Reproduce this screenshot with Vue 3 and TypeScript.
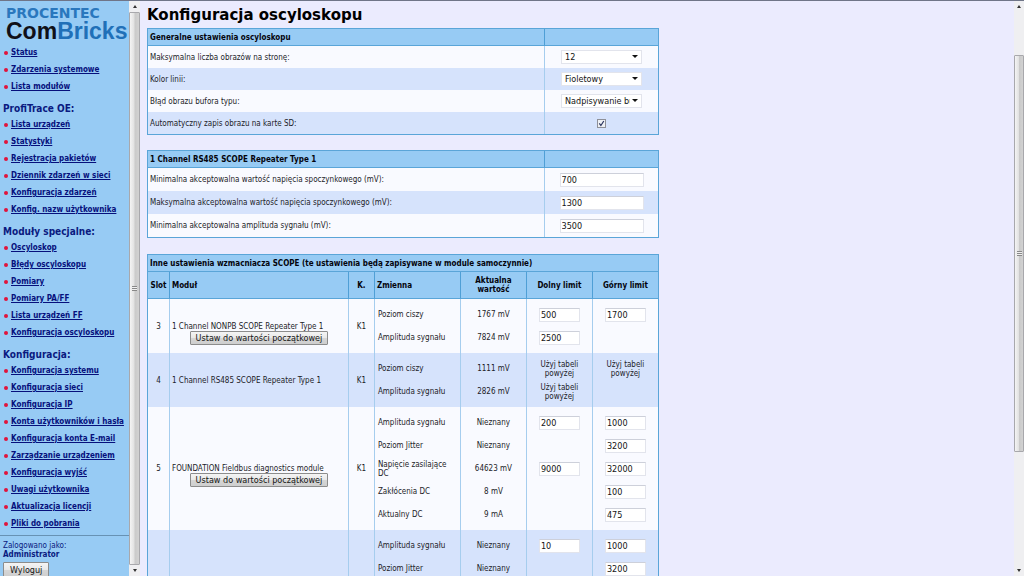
<script setup lang="ts">
import { ref } from 'vue'

interface MenuSection {
  title: string
  links: string[]
}

interface Variable {
  name: string
  value: string
  low?: string
  high?: string
}

interface ModuleRow {
  slot: string
  name: string
  channel: string
  resettable: boolean
  shared: boolean
  variables: Variable[]
}

const sections: MenuSection[] = [
  { title: '', links: ['Status', 'Zdarzenia systemowe', 'Lista modułów'] },
  {
    title: 'ProfiTrace OE:',
    links: ['Lista urządzeń', 'Statystyki', 'Rejestracja pakietów', 'Dziennik zdarzeń w sieci', 'Konfiguracja zdarzeń', 'Konfig. nazw użytkownika'],
  },
  {
    title: 'Moduły specjalne:',
    links: ['Oscyloskop', 'Błędy oscyloskopu', 'Pomiary', 'Pomiary PA/FF', 'Lista urządzeń FF', 'Konfiguracja oscyloskopu'],
  },
  {
    title: 'Konfiguracja:',
    links: [
      'Konfiguracja systemu', 'Konfiguracja sieci', 'Konfiguracja IP', 'Konta użytkowników i hasła', 'Konfiguracja konta E-mail',
      'Zarządzanie urządzeniem', 'Konfiguracja wyjść', 'Uwagi użytkownika', 'Aktualizacja licencji', 'Pliki do pobrania',
    ],
  },
]

const selects = ref([
  { id: 'per-page', label: 'Maksymalna liczba obrazów na stronę:', value: '12' },
  { id: 'line-color', label: 'Kolor linii:', value: 'Fioletowy' },
  { id: 'buffer-mode', label: 'Błąd obrazu bufora typu:', value: 'Nadpisywanie bufora' },
])
const autoSave = ref(true)

const limits = ref([
  { id: 'idle-min', label: 'Minimalna akceptowalna wartość napięcia spoczynkowego (mV):', value: '700' },
  { id: 'idle-max', label: 'Maksymalna akceptowalna wartość napięcia spoczynkowego (mV):', value: '1300' },
  { id: 'amp-min', label: 'Minimalna akceptowalna amplituda sygnału (mV):', value: '3500' },
])

const modules = ref<ModuleRow[]>([
  {
    slot: '3', name: '1 Channel NONPB SCOPE Repeater Type 1', channel: 'K1', resettable: true, shared: false,
    variables: [
      { name: 'Poziom ciszy', value: '1767 mV', low: '500', high: '1700' },
      { name: 'Amplituda sygnału', value: '7824 mV', low: '2500' },
    ],
  },
  {
    slot: '4', name: '1 Channel RS485 SCOPE Repeater Type 1', channel: 'K1', resettable: false, shared: true,
    variables: [
      { name: 'Poziom ciszy', value: '1111 mV', low: 'Użyj tabeli powyżej', high: 'Użyj tabeli powyżej' },
      { name: 'Amplituda sygnału', value: '2826 mV', low: 'Użyj tabeli powyżej' },
    ],
  },
  {
    slot: '5', name: 'FOUNDATION Fieldbus diagnostics module', channel: 'K1', resettable: true, shared: false,
    variables: [
      { name: 'Amplituda sygnału', value: 'Nieznany', low: '200', high: '1000' },
      { name: 'Poziom Jitter', value: 'Nieznany', high: '3200' },
      { name: 'Napięcie zasilające DC', value: '64623 mV', low: '9000', high: '32000' },
      { name: 'Zakłócenia DC', value: '8 mV', high: '100' },
      { name: 'Aktualny DC', value: '9 mA', high: '475' },
    ],
  },
  {
    slot: '', name: '', channel: '', resettable: false, shared: false,
    variables: [
      { name: 'Amplituda sygnału', value: 'Nieznany', low: '10', high: '1000' },
      { name: 'Poziom Jitter', value: 'Nieznany', high: '3200' },
    ],
  },
])
</script>

<template>
  <div class="frames">
    <aside class="sidebar">
      <div class="logo">
        <span class="brand">PROCENTEC</span>
        <span class="product">Com<span class="accent">Bricks</span></span>
      </div>
      <nav>
        <section v-for="s in sections" :key="s.title">
          <h2 v-if="s.title">{{ s.title }}</h2>
          <ul>
            <li v-for="l in s.links" :key="l"><a href="#">{{ l }}</a></li>
          </ul>
        </section>
      </nav>
      <div class="user">
        <div>Zalogowano jako:</div>
        <strong>Administrator</strong>
        <button type="button" class="btn logout">Wyloguj</button>
      </div>
    </aside>

    <div class="bar" aria-hidden="true">
      <i class="up"></i>
      <div class="thumb"><i class="grip"></i></div>
      <i class="down"></i>
    </div>

    <main>
      <h1>Konfiguracja oscyloskopu</h1>

      <table class="form general">
        <thead>
          <tr><th scope="col">Generalne ustawienia oscyloskopu</th><th class="field"></th></tr>
        </thead>
        <tbody>
          <tr v-for="s in selects" :key="s.id">
            <td><label :for="s.id">{{ s.label }}</label></td>
            <td class="field">
              <span class="select"><select :id="s.id" v-model="s.value"><option>{{ s.value }}</option></select></span>
            </td>
          </tr>
          <tr>
            <td><label for="auto-save">Automatyczny zapis obrazu na karte SD:</label></td>
            <td class="field">
              <span class="check">
                <input id="auto-save" v-model="autoSave" type="checkbox">
                <svg v-if="autoSave" viewBox="0 0 9 9"><path d="M2.3 4.3 L3.9 6.5 L6.8 2" /></svg>
              </span>
            </td>
          </tr>
        </tbody>
      </table>

      <table class="form limits">
        <thead>
          <tr><th scope="col">1 Channel RS485 SCOPE Repeater Type 1</th><th class="field"></th></tr>
        </thead>
        <tbody>
          <tr v-for="l in limits" :key="l.id">
            <td><label :for="l.id">{{ l.label }}</label></td>
            <td class="field"><input :id="l.id" v-model="l.value" type="text" class="wide"></td>
          </tr>
        </tbody>
      </table>

      <table class="modules">
        <colgroup>
          <col class="c-slot"><col><col class="c-ch"><col class="c-var"><col class="c-num"><col class="c-num"><col class="c-num">
        </colgroup>
        <thead>
          <tr><th colspan="7">Inne ustawienia wzmacniacza SCOPE (te ustawienia będą zapisywane w module samoczynnie)</th></tr>
          <tr class="heads">
            <th scope="col" class="mid">Slot</th>
            <th scope="col">Moduł</th>
            <th scope="col" class="mid">K.</th>
            <th scope="col">Zmienna</th>
            <th scope="col" class="mid">Aktualna wartość</th>
            <th scope="col" class="mid">Dolny limit</th>
            <th scope="col" class="mid">Górny limit</th>
          </tr>
        </thead>
        <tbody v-for="m in modules" :key="m.slot">
          <tr v-for="(v, i) in m.variables" :key="v.name">
            <template v-if="i === 0">
              <td :rowspan="m.variables.length" class="mid">{{ m.slot }}</td>
              <td :rowspan="m.variables.length" :class="{ resettable: m.resettable }">
                {{ m.name }}
                <button v-if="m.resettable" type="button" class="btn reset">Ustaw do wartości początkowej</button>
              </td>
              <td :rowspan="m.variables.length" class="mid">{{ m.channel }}</td>
            </template>
            <td class="line">{{ v.name }}</td>
            <td class="line mid">{{ v.value }}</td>
            <td class="line mid">
              <template v-if="m.shared">{{ v.low }}</template>
              <input v-else-if="v.low" v-model="v.low" type="text" class="narrow" :aria-label="`${v.name}, dolny limit`">
            </td>
            <td class="line mid">
              <template v-if="m.shared">{{ v.high }}</template>
              <input v-else-if="v.high" v-model="v.high" type="text" class="narrow" :aria-label="`${v.name}, górny limit`">
            </td>
          </tr>
        </tbody>
      </table>
    </main>

    <div class="bar page" aria-hidden="true">
      <i class="up"></i>
      <div class="thumb"><i class="grip"></i></div>
      <i class="down"></i>
    </div>
  </div>
</template>

<style>
body {
  background: #ebebfe;
}
</style>

<style scoped>
.frames {
  box-sizing: border-box;
  display: flex;
  height: 100vh;
  overflow: hidden;
  border-top: 1px solid #6f7588;
  background: #ebebfe;
  color: #1c1c28;
  font: 8px/9px "DejaVu Sans Condensed", "DejaVu Sans", Verdana, sans-serif;
}

.sidebar {
  flex: 0 0 129px;
  overflow: hidden;
  background: #97cbf4;
  color: #0a1a80;
}

.logo {
  display: flex;
  flex-direction: column;
  height: 43px;
  padding: 4px 0 0 6px;
  box-sizing: border-box;
  white-space: nowrap;
}

.brand {
  color: #2a77bd;
  font: bold 14px/16px "DejaVu Sans", Verdana, sans-serif;
}

.product {
  color: #101018;
  font: bold 23px/20px "Liberation Sans", Arial, sans-serif;
}

.accent {
  color: #2070b8;
}

h2 {
  margin: 0;
  padding: 6px 0 0 3px;
  font-size: 10px;
  line-height: 15px;
}

ul {
  margin: 0;
  padding: 0;
  list-style: none;
}

li {
  display: flex;
  align-items: center;
  gap: 3px;
  height: 17px;
  padding-left: 4px;
  white-space: nowrap;
}

li::before {
  content: "";
  flex: none;
  width: 4px;
  height: 4px;
  border-radius: 2px;
  background: #e0143c;
}

a {
  color: #06107c;
  font-weight: bold;
}

.user {
  display: flex;
  flex-direction: column;
  align-items: flex-start;
  margin-top: 3px;
  padding: 5px 3px;
  border-top: 1px solid #6792b4;
}

.btn {
  box-sizing: border-box;
  height: 14px;
  padding: 0 5px;
  border: 1px solid #8c8c8c;
  border-radius: 1px;
  background: linear-gradient(#f4f4f4, #e8e8e8 50%, #d6d6d6 51%, #cecece);
  color: #141414;
  font: 9px/12px "DejaVu Sans Condensed", "Noto Sans", sans-serif;
  white-space: nowrap;
}

.logout {
  height: 16px;
  margin-top: 3px;
  padding: 0 6px;
}

.bar {
  display: flex;
  flex: 0 0 11px;
  flex-direction: column;
  align-items: center;
  background: #efeff1;
}

.bar.page {
  flex-basis: 10px;
}

.up,
.down {
  flex: none;
  width: 0;
  height: 0;
  margin: 4px 0;
  border: 2px solid transparent;
}

.up {
  border-top: 0;
  border-bottom: 3px solid #333;
}

.down {
  border-bottom: 0;
  border-top: 3px solid #333;
}

.thumb {
  display: flex;
  flex: 1;
  align-items: center;
  justify-content: center;
  align-self: stretch;
  box-sizing: border-box;
  border: 1px solid #a8a8ac;
  border-radius: 1px;
  background: linear-gradient(90deg, #f4f4f4, #e2e2e2 45%, #cacaca 55%, #d2d2d2);
}

.page .thumb {
  flex: 0 0 69%;
  margin-top: 43px;
}

.page .down {
  margin-top: auto;
}

.grip {
  width: 5px;
  height: 5px;
  background: repeating-linear-gradient(#888 0 1px, #f0f0f0 1px 2px);
}

main {
  flex: 1;
  min-width: 0;
  padding: 4px 7px 0;
  overflow: hidden;
}

h1 {
  margin: 0 0 3px;
  color: #000;
  font: bold 15px/20px "DejaVu Sans", Verdana, sans-serif;
}

table {
  width: 100%;
  max-width: 512px;
  margin-bottom: 15px;
  border: 1px solid #5aa5d8;
  border-collapse: separate;
  border-spacing: 0;
  table-layout: fixed;
  background: #f9faff;
}

.limits {
  margin-bottom: 16px;
}

th,
td {
  box-sizing: border-box;
  padding: 0 2px;
  text-align: left;
}

th {
  height: 17px;
  border-bottom: 1px solid #5aa5d8;
  background: #97cbf4;
  color: #04040c;
}

th + th {
  border-left: 1px solid #4f9fd6;
}

.form td {
  height: 22px;
}

.limits td {
  height: 23px;
}

.form .field {
  width: 114px;
  border-left: 1px solid #a6cdee;
  text-align: center;
}

.form th.field {
  border-left-color: #4f9fd6;
}

.form tbody tr:nth-child(even),
.modules tbody:nth-of-type(even) {
  background: #d6e3fc;
}

input,
select {
  box-sizing: border-box;
  margin: 0;
  border: 1px solid #e2e4ec;
  border-radius: 0;
  background: #fff;
  color: #141414;
  font: 9px/12px "DejaVu Sans Condensed", "Noto Sans", sans-serif;
  vertical-align: middle;
}

input[type="text"] {
  height: 14px;
  padding: 0 1px;
  border-top-color: #cdd0da;
}

.wide {
  width: 84px;
}

.modules .narrow {
  width: 41px;
}

.select {
  display: inline-block;
  position: relative;
  vertical-align: middle;
}

select {
  display: block;
  width: 81px;
  height: 14px;
  padding: 0 11px 0 3px;
  appearance: none;
  text-overflow: clip;
}

.select::after {
  content: "";
  position: absolute;
  top: 5px;
  right: 4px;
  border: 3px solid transparent;
  border-top: 3px solid #111;
  border-bottom: 0;
  pointer-events: none;
}

.check {
  display: inline-block;
  position: relative;
  width: 9px;
  height: 9px;
  vertical-align: middle;
}

.check input {
  display: block;
  width: 9px;
  height: 9px;
  border-color: #8e9098;
  background: #eef0f4;
  appearance: none;
}

.check svg {
  position: absolute;
  inset: 0;
  fill: none;
  stroke: #2b3560;
  stroke-width: 1.2;
  pointer-events: none;
}

.c-slot {
  width: 21px;
}

.c-ch {
  width: 26px;
}

.c-var {
  width: 86px;
}

.c-num {
  width: 66px;
}

.heads th {
  height: 27px;
}

.modules td + td,
.modules tr:not(:first-child) td {
  border-left: 1px solid #a6cdee;
}

.modules .line {
  height: 23px;
  padding: 0 3px;
}

.modules .line.mid {
  padding: 0 8px;
}

.modules tr:first-child .line {
  height: 27px;
  padding-top: 4px;
}

.modules tr:last-child .line {
  height: 27px;
  padding-bottom: 4px;
}

.modules .mid {
  text-align: center;
}

.modules th.mid,
.modules td.mid:not(.line) {
  padding: 0;
}

.modules th.mid:nth-child(5) {
  padding: 0 8px;
}

.resettable {
  padding-top: 14px;
}

.reset {
  display: block;
  margin: 0 auto;
}
</style>
